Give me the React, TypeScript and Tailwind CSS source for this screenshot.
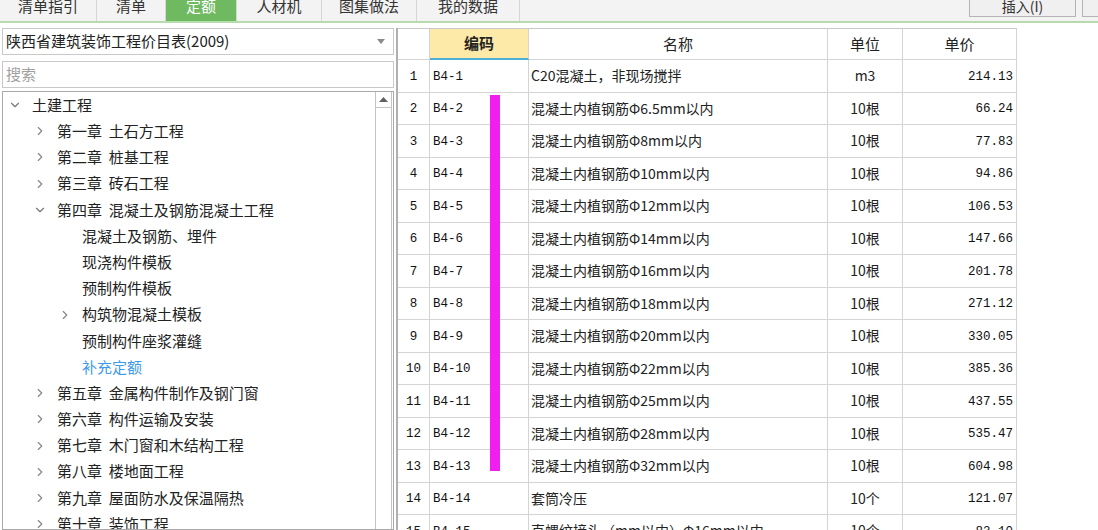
import React, { useState } from "react";
import { ChevronDown, ChevronRight } from "lucide-react";

interface TreeNode {
  label: string;
  level: number;
  arrow?: "down" | "right";
  active?: boolean;
}

interface Row {
  no: number;
  code: string;
  name: string;
  unit: string;
  price: string;
}

const tabs = ["清单指引", "清单", "定额", "人材机", "图集做法", "我的数据"];
const tabWidths = ["w-[97px]", "w-[69px]", "w-[71px]", "w-[85px]", "w-[95px]", "w-[103px]"];

const tree: TreeNode[] = [
  { label: "土建工程", level: 0, arrow: "down" },
  { label: "第一章  土石方工程", level: 1, arrow: "right" },
  { label: "第二章  桩基工程", level: 1, arrow: "right" },
  { label: "第三章  砖石工程", level: 1, arrow: "right" },
  { label: "第四章  混凝土及钢筋混凝土工程", level: 1, arrow: "down" },
  { label: "混凝土及钢筋、埋件", level: 2 },
  { label: "现浇构件模板", level: 2 },
  { label: "预制构件模板", level: 2 },
  { label: "构筑物混凝土模板", level: 2, arrow: "right" },
  { label: "预制构件座浆灌缝", level: 2 },
  { label: "补充定额", level: 2, active: true },
  { label: "第五章  金属构件制作及钢门窗", level: 1, arrow: "right" },
  { label: "第六章  构件运输及安装", level: 1, arrow: "right" },
  { label: "第七章  木门窗和木结构工程", level: 1, arrow: "right" },
  { label: "第八章  楼地面工程", level: 1, arrow: "right" },
  { label: "第九章  屋面防水及保温隔热", level: 1, arrow: "right" },
  { label: "第十章  装饰工程", level: 1, arrow: "right" },
];

const sizes = ["6.5", "8", "10", "12", "14", "16", "18", "20", "22", "25", "28", "32"];
const prices = ["66.24", "77.83", "94.86", "106.53", "147.66", "201.78", "271.12", "330.05", "385.36", "437.55", "535.47", "604.98"];

const rows: Row[] = [
  { no: 1, code: "B4-1", name: "C20混凝土，非现场搅拌", unit: "m3", price: "214.13" },
  ...sizes.map((s, i) => ({
    no: i + 2,
    code: `B4-${i + 2}`,
    name: `混凝土内植钢筋Φ${s}mm以内`,
    unit: "10根",
    price: prices[i],
  })),
  { no: 14, code: "B4-14", name: "套筒冷压", unit: "10个", price: "121.07" },
  { no: 15, code: "B4-15", name: "直螺纹接头（mm以内）Φ16mm以内", unit: "10个", price: "83.10" },
];

const pad = ["pl-[5px]", "pl-[30px]", "pl-[55px]"];

const App = () => {
  const [activeTab, setActiveTab] = useState("定额");

  return (
    <div className="w-[1098px] h-[530px] overflow-hidden bg-white text-[#222] font-['Noto_Sans_CJK_SC',sans-serif]">
      {/* Tabs */}
      <div className="flex h-[23px] bg-[#f3f3f3] border-b-2 border-[#b6dbad] overflow-hidden">
        {tabs.map((tab, i) => (
          <div
            key={tab}
            onClick={() => setActiveTab(tab)}
            className={`${tabWidths[i]} ${
              activeTab === tab ? "bg-[#6fb960] text-white" : "text-[#333]"
            } flex justify-center border-r border-[#d6d6d6] cursor-pointer overflow-hidden`}
          >
            <span className="text-[15px] leading-[15px] -mt-[2px]">{tab}</span>
          </div>
        ))}
        <div className="flex-1" />
        <div className="shrink-0 w-[107px] h-[18px] -mt-[1px] border border-[#b4b4b4] bg-[#f0f0f0] flex justify-center overflow-hidden">
          <span className="text-[14px] leading-[14px] -mt-[1px] text-[#333]">插入(I)</span>
        </div>
        <div className="shrink-0 w-[16px] h-[18px] -mt-[1px] ml-[6px] border-l border-t border-b border-[#b4b4b4] bg-[#f0f0f0]" />
      </div>

      <div className="flex pt-[5px] h-[507px]">
        {/* Left panel */}
        <div className="w-[394px] pl-[2px] flex flex-col">
          <div className="h-[27px] border border-[#c9c9c9] flex items-center justify-between pl-[3px] pr-[8px]">
            <span className="text-[15px]">陕西省建筑装饰工程价目表(2009)</span>
            <svg width="8" height="5" viewBox="0 0 8 5">
              <path d="M0 0 L8 0 L4 5 Z" fill="#8a8a8a" />
            </svg>
          </div>
          <div className="h-[27px] mt-[6px] border border-[#c9c9c9] flex items-center pl-[3px]">
            <span className="text-[15px] text-[#a0a0a0]">搜索</span>
          </div>
          <div className="flex-1 mt-[3px] border border-[#a9a9a9] flex overflow-hidden">
            <div className="flex-1">
              {tree.map((node) => (
                <div key={node.label} className={`${pad[node.level]} h-[26.2px] flex items-center`}>
                  <div className="w-[14px] mr-[10px] flex justify-center">
                    {node.arrow === "down" && <ChevronDown size={14} strokeWidth={2} color="#777" />}
                    {node.arrow === "right" && <ChevronRight size={14} strokeWidth={2} color="#888" />}
                  </div>
                  <span
                    className={`text-[15px] whitespace-pre ${
                      node.active ? "text-[#3d9be9]" : "text-[#222]"
                    }`}
                  >
                    {node.label}
                  </span>
                </div>
              ))}
            </div>
            {/* Scrollbar */}
            <div className="w-[17px] border-l border-r border-[#c4c4c4] mr-[1px]">
              <div className="h-[16px] border-b border-[#c4c4c4] flex items-center justify-center">
                <svg width="9" height="5" viewBox="0 0 9 5">
                  <path d="M0 5 L9 5 L4.5 0 Z" fill="#606060" />
                </svg>
              </div>
            </div>
          </div>
        </div>

        {/* Table */}
        <div className="relative ml-[2px] border-l-2 border-[#b0b0b0]">
          <div className="grid grid-cols-[32px_99px_299px_75px_114px] border-t border-[#c8c8c8]">
            <div className="h-[31px] border-r border-b border-[#d4d4d4]" />
            <div className="h-[31px] bg-[#fde9a8] border-r border-b-2 border-r-[#d4d4d4] border-b-[#4cafd4] flex items-center justify-center text-[15px] font-bold">
              编码
            </div>
            <div className="h-[31px] border-r border-b border-[#d4d4d4] flex items-center justify-center text-[15px]">名称</div>
            <div className="h-[31px] border-r border-b border-[#d4d4d4] flex items-center justify-center text-[15px]">单位</div>
            <div className="h-[31px] border-r border-b border-[#d4d4d4] flex items-center justify-center text-[15px]">单价</div>

            {rows.map((row) => (
              <React.Fragment key={row.no}>
                <div className="h-[32.5px] pt-[3px] border-r border-b border-[#d4d4d4] flex items-center justify-center font-['Liberation_Mono',monospace] text-[12.5px] text-[#111]">
                  {row.no}
                </div>
                <div className="h-[32.5px] pt-[3px] border-r border-b border-[#d4d4d4] flex items-center pl-[3px] font-['Liberation_Mono',monospace] text-[12.5px] text-[#111]">
                  {row.code}
                </div>
                <div className="h-[32.5px] border-r border-b border-[#d4d4d4] flex items-center pl-[2px] text-[14px] whitespace-nowrap overflow-hidden">
                  {row.name}
                </div>
                <div className="h-[32.5px] border-r border-b border-[#d4d4d4] flex items-center justify-center text-[14px]">
                  {row.unit}
                </div>
                <div className="h-[32.5px] pt-[3px] border-r border-b border-[#d4d4d4] flex items-center justify-end pr-[3px] font-['Liberation_Mono',monospace] text-[12.5px] text-[#111]">
                  {row.price}
                </div>
              </React.Fragment>
            ))}
          </div>
          {/* highlight marker */}
          <div className="absolute left-[92px] top-[67px] w-[10px] h-[376px] bg-[#f01ff0]" />
        </div>
      </div>
    </div>
  );
};

export default App;
